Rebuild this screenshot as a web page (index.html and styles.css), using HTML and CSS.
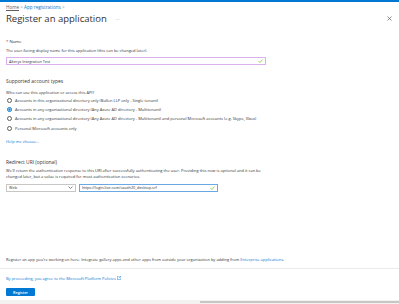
FILE: index.html
```html
<!DOCTYPE html>
<html>
<head>
    <title>Register an application</title>
    <link rel="stylesheet" href="styles.css">
</head>
<body>
    <div class="topbar"></div>

    <div class="main">
        <!-- Breadcrumb -->
        <nav class="crumbs">
            <a class="home">Home</a> <span class="sep">&gt;</span> <a>App registrations</a> <span class="sep">&gt;</span>
        </nav>

        <!-- Blade header -->
        <div class="head">
            <h1>Register an application</h1>
            <span class="more">···</span>
            <span class="spacer"></span>
            <svg class="close" width="5" height="5" viewBox="0 0 10 10">
                <path d="M1 1 L9 9 M9 1 L1 9" stroke="#605e5c" stroke-width="1.4"/>
            </svg>
        </div>

        <!-- Name field -->
        <div class="label name-label"><span class="req">*</span> Name</div>
        <p class="hint">The user-facing display name for this application (this can be changed later).</p>
        <div class="input name-input">
            <span class="value">Alteryx Integration Test</span>
            <svg class="check" width="5" height="4" viewBox="0 0 10 8">
                <path d="M1 4 L4 7 L9 1" fill="none" stroke="#8cc63f" stroke-width="1.6"/>
            </svg>
        </div>

        <!-- Account types -->
        <h2 class="section">Supported account types</h2>
        <p class="hint who">Who can use this application or access this API?</p>
        <div class="radios">
            <label class="radio"><span class="dot"></span>Accounts in this organizational directory only (Bullen LLP only - Single tenant)</label>
            <label class="radio on"><span class="dot"></span>Accounts in any organizational directory (Any Azure AD directory - Multitenant)</label>
            <label class="radio"><span class="dot"></span>Accounts in any organizational directory (Any Azure AD directory - Multitenant) and personal Microsoft accounts (e.g. Skype, Xbox)</label>
            <label class="radio"><span class="dot"></span>Personal Microsoft accounts only</label>
        </div>
        <a class="link help">Help me choose...</a>

        <!-- Redirect URI -->
        <h2 class="section redirect">Redirect URI (optional)</h2>
        <p class="hint wrap">We'll return the authentication response to this URI after successfully authenticating the user. Providing this now is optional and it can be changed later, but a value is required for most authentication scenarios.</p>
        <div class="uri-row">
            <div class="input select">
                <span class="value">Web</span>
                <svg class="chev" width="5" height="3" viewBox="0 0 10 6">
                    <path d="M1 1 L5 5 L9 1" fill="none" stroke="#323130" stroke-width="1.2"/>
                </svg>
            </div>
            <div class="input uri-input">
                <span class="value">https://login.live.com/oauth20_desktop.srf</span>
                <svg class="check" width="5" height="4" viewBox="0 0 10 8">
                    <path d="M1 4 L4 7 L9 1" fill="none" stroke="#8cc63f" stroke-width="1.6"/>
                </svg>
            </div>
        </div>
    </div>

    <!-- Footer -->
    <div class="footer">
        <p class="hint notice">Register an app you're working on here. Integrate gallery apps and other apps from outside your organization by adding from <a class="link">Enterprise applications</a>.</p>
        <div class="actions">
            <a class="link policy">By proceeding, you agree to the Microsoft Platform Policies
                <svg width="4" height="4" viewBox="0 0 10 10">
                    <path d="M4 1 H1 V9 H9 V6 M6 1 H9 V4 M9 1 L4.5 5.5" fill="none" stroke="#0078d4" stroke-width="1.2"/>
                </svg>
            </a>
            <button class="primary">Register</button>
        </div>
    </div>

    <div class="scrollbar"><div class="thumb"></div></div>
</body>
</html>
```

FILE: styles.css
```css
/* Page */
* {
    box-sizing: border-box;
}

body {
    margin: 0;
    height: 100vh;
    display: flex;
    flex-direction: column;
    font-family: 'Open Sans', Arial, sans-serif;
    color: #323130;
    background-color: #ffffff;
    overflow: hidden;
}

a {
    color: #0078d4;
}

p, h1, h2 {
    margin: 0;
}

.topbar {
    height: 2px;
    background-color: #0078d4;
}

.main {
    flex: 1;
    padding: 0 7px 0 6px;
}

/* Breadcrumb */
.crumbs {
    margin-top: 3px;
    font-size: 4.6px;
    line-height: 5px;
}

.crumbs .home {
    color: #605e5c;
    text-decoration: underline;
}

.crumbs .sep {
    color: #8a8886;
}

/* Header */
.head {
    display: flex;
    align-items: center;
    height: 10px;
    margin-top: 3.5px;
}

.head h1 {
    font-size: 9.5px;
    font-weight: 400;
}

.more {
    margin-left: 9px;
    font-size: 5px;
    color: #a19f9d;
}

.spacer {
    flex: 1;
}

/* Form texts */
.label {
    font-size: 4.3px;
    line-height: 5px;
}

.name-label {
    margin-top: 15px;
}

.req {
    color: #a4262c;
}

.hint {
    font-size: 4px;
    line-height: 5px;
}

.name-label + .hint {
    margin-top: 4px;
}

.section {
    font-size: 4.9px;
    font-weight: 400;
    line-height: 6px;
    margin-top: 13px;
}

.who {
    margin-top: 5.5px;
}

/* Inputs */
.input {
    display: flex;
    align-items: center;
    height: 8px;
    padding: 0 2px;
    border: 1px solid #c8c6c4;
    font-size: 3.8px;
}

.input .value {
    flex: 1;
}

.name-input {
    width: 260px;
    margin-top: 4.5px;
    border-color: #dcb0ec;
}

/* Radios */
.radios {
    margin-top: 1px;
}

.radio {
    display: flex;
    align-items: center;
    height: 9.3px;
    font-size: 4px;
}

.dot {
    width: 5px;
    height: 5px;
    margin: 0 3px 0 1px;
    border: 0.6px solid #605e5c;
    border-radius: 50%;
}

.radio.on .dot {
    border-color: #0078d4;
    background: radial-gradient(circle, #0078d4 0 45%, #ffffff 50%);
}

.link {
    font-size: 4px;
    line-height: 5px;
    text-decoration: none;
}

.help {
    display: block;
    margin-top: 6px;
}

.section.redirect {
    margin-top: 15.5px;
}

.wrap {
    margin-top: 2.5px;
    line-height: 6.5px;
    max-width: 256px;
}

.uri-row {
    display: flex;
    gap: 3px;
    margin-top: 3px;
}

.select {
    width: 70px;
}

.uri-input {
    width: 139px;
    border-color: #6aa8e4;
}

/* Footer */
.footer {
    padding: 0 6px;
}

.notice {
    padding-bottom: 6px;
    margin: 0 -6px;
    padding-left: 6px;
    border-bottom: 1px solid #edebe9;
}

.actions {
    padding-top: 7px;
}

.policy {
    display: block;
}

.primary {
    display: block;
    width: 29px;
    height: 8px;
    margin-top: 7.5px;
    padding: 0;
    border: none;
    border-radius: 1px;
    background-color: #0078d4;
    color: #ffffff;
    font-family: 'Open Sans', Arial, sans-serif;
    font-size: 3.8px;
    font-weight: 600;
}

.scrollbar {
    height: 4px;
    margin-top: 4px;
    background-color: #f3f2f1;
    display: flex;
    justify-content: flex-end;
}

.thumb {
    width: 199px;
    height: 2px;
    margin-top: 1px;
    background-color: #c8c6c4;
}
```
